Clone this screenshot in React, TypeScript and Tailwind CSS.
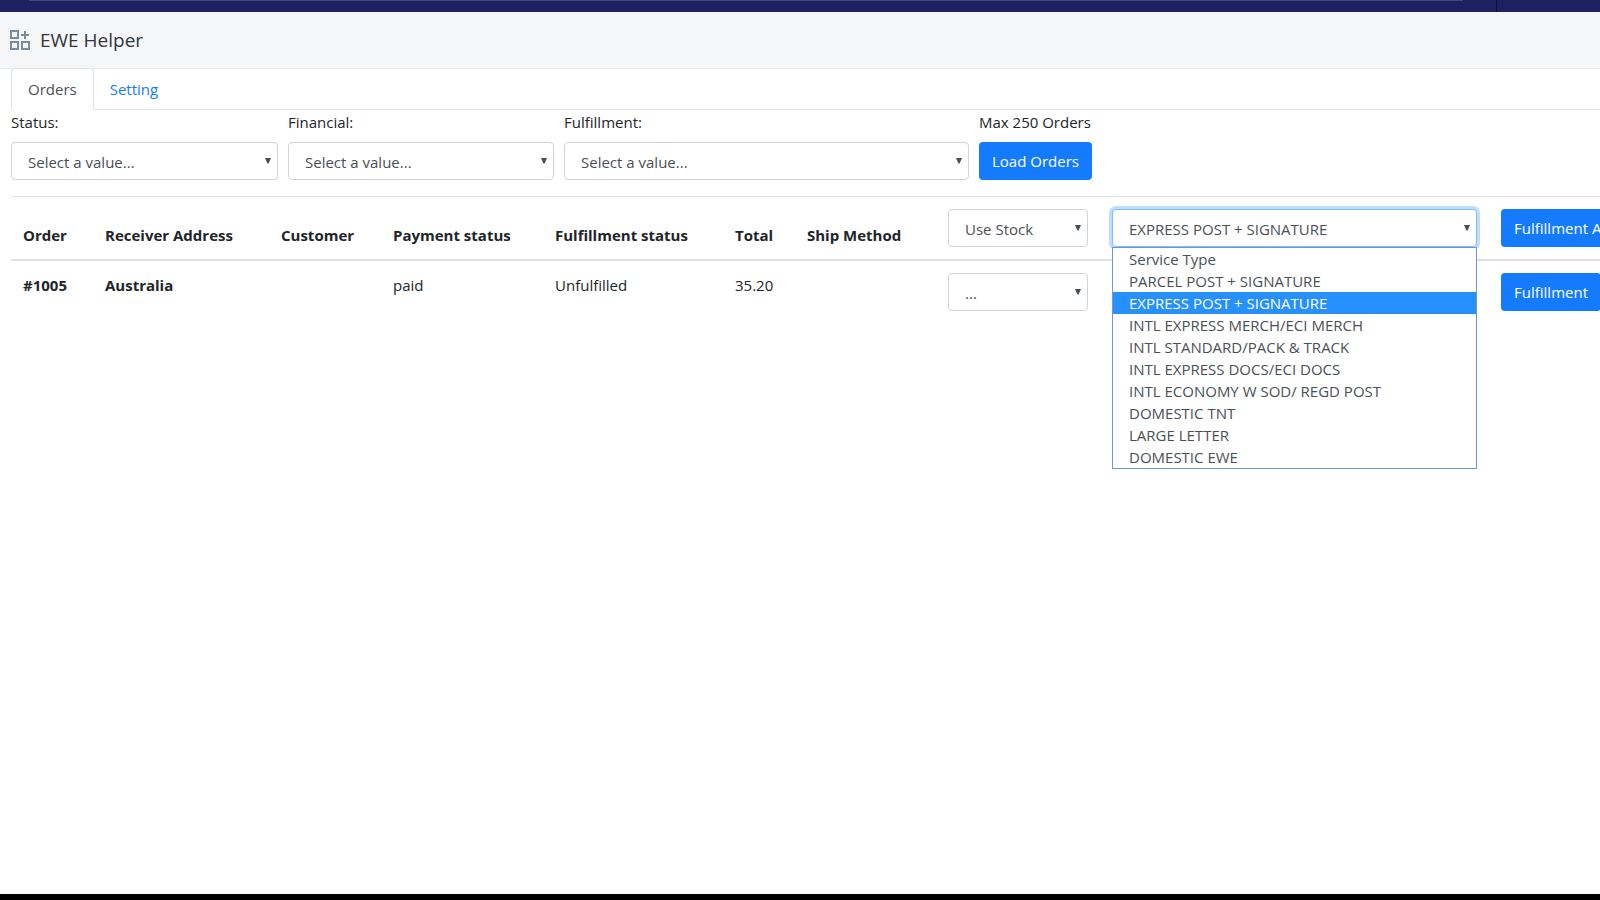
import { useState } from "react";
import type { ReactNode } from "react";

const SERVICES = [
  "Service Type",
  "PARCEL POST + SIGNATURE",
  "EXPRESS POST + SIGNATURE",
  "INTL EXPRESS MERCH/ECI MERCH",
  "INTL STANDARD/PACK & TRACK",
  "INTL EXPRESS DOCS/ECI DOCS",
  "INTL ECONOMY W SOD/ REGD POST",
  "DOMESTIC TNT",
  "LARGE LETTER",
  "DOMESTIC EWE",
];

const HEADINGS = [
  "Order",
  "Receiver Address",
  "Customer",
  "Payment status",
  "Fulfillment status",
  "Total",
  "Ship Method",
];

const FILTERS = [
  { id: "status", label: "Status:" },
  { id: "financial", label: "Financial:" },
  { id: "fulfillment", label: "Fulfillment:" },
];

interface SelectBoxProps {
  id: string;
  label?: string;
  options: string[];
  value?: string;
  active?: boolean;
  onChange?: (value: string) => void;
  onOpen?: () => void;
}

function SelectBox({ id, label, options, value, active, onChange, onOpen }: SelectBoxProps) {
  return (
    <div className="relative">
      <select
        id={id}
        aria-label={label}
        value={value ?? options[0]}
        onChange={(e) => onChange?.(e.target.value)}
        onMouseDown={(e) => {
          if (!onOpen) return;
          e.preventDefault();
          onOpen();
        }}
        className={`block h-[38px] w-full appearance-none rounded border bg-white pt-0.5 pr-6 pl-4 font-normal text-[#495057] outline-none ${
          active ? "border-[#80bdff] ring-3 ring-[#bfdeff]" : "border-[#ced4da]"
        }`}
      >
        {options.map((o) => (
          <option key={o}>{o}</option>
        ))}
      </select>
      <svg className="pointer-events-none absolute top-4 right-[7px] h-1.5 w-1.5" viewBox="0 0 6 6" aria-hidden="true">
        <path d="M0 0h6L3.6 5.5H2.4z" fill="#495057" />
      </svg>
    </div>
  );
}

function BlueButton({ children }: { children: ReactNode }) {
  return (
    <button
      type="button"
      className="h-[38px] rounded bg-[#147bff] px-[13px] font-medium whitespace-nowrap text-white"
    >
      {children}
    </button>
  );
}

function AppIcon() {
  return (
    <svg className="h-5 w-5" viewBox="0 0 20 20" fill="none" stroke="#798c9c" strokeWidth="2" aria-hidden="true">
      <path d="M1 1h7v7H1zM1 12h7v7H1zM12 12h7v7h-7zM15 1v8M11 5h8" />
    </svg>
  );
}

export default function App() {
  const [service, setService] = useState("EXPRESS POST + SIGNATURE");
  const [open, setOpen] = useState(true);

  return (
    <div className="flex min-h-screen flex-col overflow-hidden bg-white font-['Open_Sans','Noto_Sans',sans-serif] text-[15px] leading-6 text-[#212529]">
      <div className="flex h-3 items-start bg-[#1c2260] pl-[29px]">
        <div className="h-px flex-1 bg-[#43467f]" />
        <div className="ml-[33px] h-3 w-px bg-[#10122f]" />
        <div className="w-[103px]" />
      </div>

      <header className="flex h-14 items-center gap-2.5 bg-[#f4f6f8] pl-2.5">
        <AppIcon />
        <h1 className="text-[19px] text-[#31373d]">EWE Helper</h1>
      </header>

      <main className="flex-1 pl-[11px]">
        <nav className="-ml-[11px] flex border-t border-[#e7e9ec] pl-[11px]">
          <div className="-mt-px flex flex-1 border-b border-[#dee2e6]">
            <a
              href="#orders"
              aria-current="page"
              className="-mb-px rounded-t border border-[#dee2e6] border-b-white bg-white px-4 py-2 text-[#495057]"
            >
              Orders
            </a>
            <a href="#setting" className="px-4 pt-[9px] pb-2 text-[#147bff]">
              Setting
            </a>
          </div>
        </nav>

        <form className="grid grid-cols-[267fr_266fr_405fr_113fr_498fr] gap-x-2.5 pb-4">
          {FILTERS.map((f) => (
            <div key={f.id}>
              <label htmlFor={f.id} className="mb-2 block">
                {f.label}
              </label>
              <SelectBox id={f.id} options={["Select a value..."]} />
            </div>
          ))}
          <div>
            <p className="mb-2 whitespace-nowrap">Max 250 Orders</p>
            <BlueButton>Load Orders</BlueButton>
          </div>
        </form>

        <table className="w-full min-w-[1662px] table-fixed border-collapse text-left">
          <colgroup>
            <col className="w-[82px]" />
            <col className="w-[176px]" />
            <col className="w-[112px]" />
            <col className="w-[162px]" />
            <col className="w-[180px]" />
            <col className="w-[72px]" />
            <col className="w-[141px]" />
            <col className="w-[164px]" />
            <col className="w-[389px]" />
            <col />
          </colgroup>
          <thead>
            <tr className="border-t border-b-2 border-t-[#dee2e6] border-b-[#dee2e6]">
              {HEADINGS.map((h) => (
                <th key={h} className="p-3 align-bottom font-bold whitespace-nowrap">
                  {h}
                </th>
              ))}
              <th className="p-3">
                <SelectBox id="stock-all" label="Stock" options={["Use Stock"]} />
              </th>
              <th className="p-3 font-normal">
                <div className="relative">
                  <SelectBox
                    id="service"
                    label="Service type"
                    options={SERVICES}
                    value={service}
                    active
                    onChange={setService}
                    onOpen={() => setOpen(!open)}
                  />
                  {open && (
                    <ul
                      role="listbox"
                      aria-label="Service types"
                      className="absolute top-full left-0 z-10 w-full border border-[#6f97d6] bg-white leading-[22px] text-[#495057]"
                    >
                      {SERVICES.map((s) => (
                        <li
                          key={s}
                          role="option"
                          aria-selected={s === service}
                          onClick={() => {
                            setService(s);
                            setOpen(false);
                          }}
                          className={`pl-4 ${s === service ? "bg-[#2690ff] text-white" : ""}`}
                        >
                          {s}
                        </li>
                      ))}
                    </ul>
                  )}
                </div>
              </th>
              <th className="p-3">
                <BlueButton>Fulfillment All</BlueButton>
              </th>
            </tr>
          </thead>
          <tbody>
            <tr className="align-top">
              <th scope="row" className="p-3 font-bold">
                #1005
              </th>
              <td className="p-3 font-bold">Australia</td>
              <td className="p-3" />
              <td className="p-3">paid</td>
              <td className="p-3">Unfulfilled</td>
              <td className="p-3">35.20</td>
              <td className="p-3" />
              <td className="p-3">
                <SelectBox id="stock-1005" label="Stock for #1005" options={["..."]} />
              </td>
              <td className="p-3" />
              <td className="p-3">
                <BlueButton>Fulfillment</BlueButton>
              </td>
            </tr>
          </tbody>
        </table>
      </main>

      <footer className="h-1.5 bg-black" />
    </div>
  );
}
